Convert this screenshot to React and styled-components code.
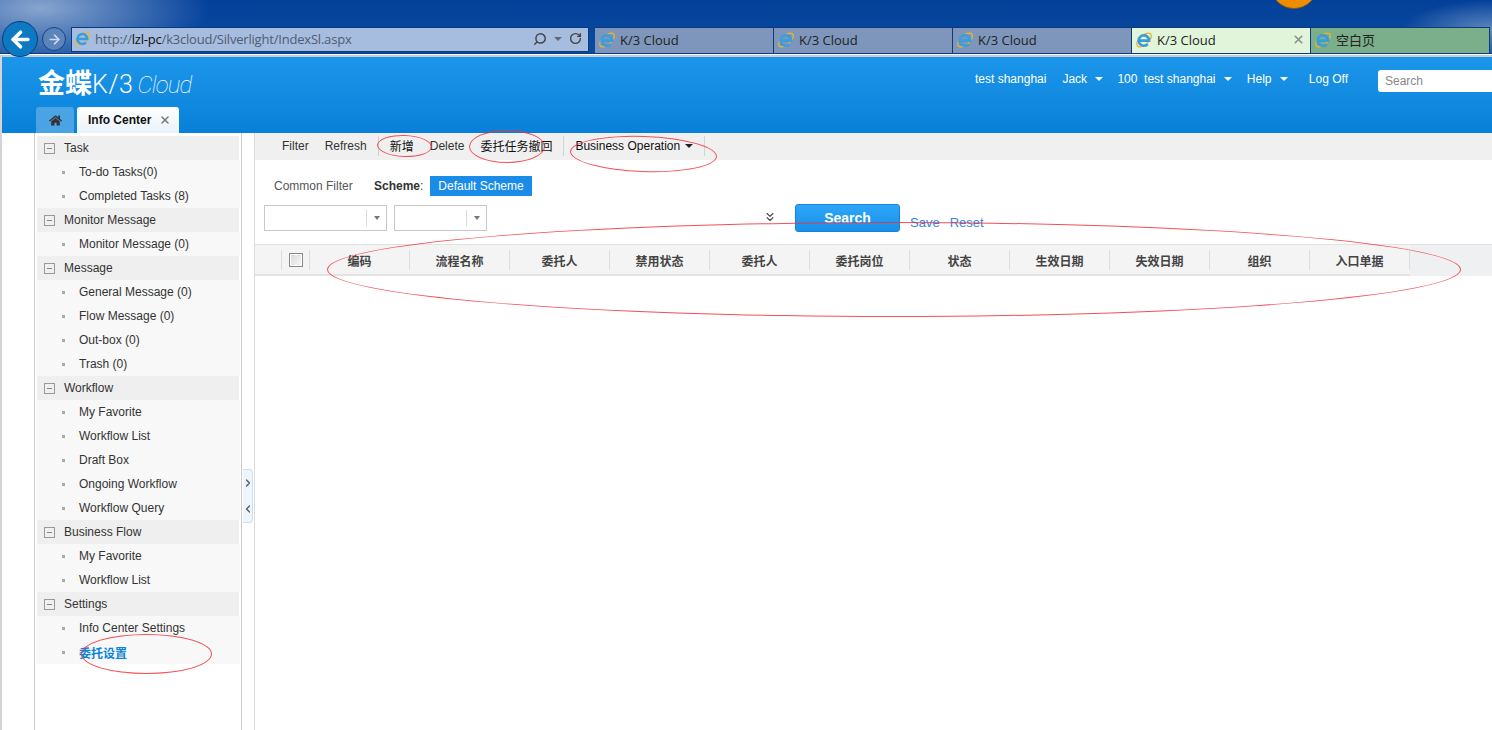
import React from 'react'
import styled, { createGlobalStyle } from 'styled-components'
import { FaHome } from 'react-icons/fa'
import { Search as SearchIcon, RotateCw, ArrowLeft, ArrowRight, X, ChevronRight, ChevronLeft, ChevronsDown } from 'lucide-react'

const GlobalStyle = createGlobalStyle`
  html, body { margin: 0; padding: 0; background: #fff; }
  body { font-family: "Liberation Sans", "Noto Sans CJK SC", sans-serif; font-size: 12px; color: #333; }
`

const Screen = styled.div`
  position: relative;
  width: 1492px;
  height: 730px;
  overflow: hidden;
  background: #fff;
`

/* browser chrome */
const Chrome = styled.div`
  position: relative;
  display: flex;
  align-items: flex-start;
  height: 54px;
  padding-top: 27px;
  box-sizing: border-box;
  border-bottom: 1px solid #0b3a7e;
  background:
    radial-gradient(ellipse 170px 60px at 40px 8px, rgba(170, 190, 220, 0.8), transparent),
    radial-gradient(ellipse 90px 30px at 1492px 30px, rgba(170, 190, 220, 0.55), transparent),
    linear-gradient(#03409a, #0b4c9f);
`

const Sun = styled.div`
  position: absolute;
  left: 1270px;
  top: -39px;
  width: 48px;
  height: 48px;
  border-radius: 50%;
  background: #f08c00;
  border: 1px solid #7a5a20;
  box-sizing: border-box;
`

const BackBtn = styled.div`
  position: absolute;
  left: 2px;
  top: 21px;
  width: 36px;
  height: 36px;
  z-index: 2;
  box-sizing: border-box;
  border-radius: 50%;
  border: 1px solid #0b3a7e;
  background: #0c79c2;
  color: #fff;
  display: flex;
  align-items: center;
  justify-content: center;
`

const ForwardBtn = styled.div`
  width: 24px;
  height: 24px;
  margin: 0 5px 0 42px;
  border-radius: 50%;
  box-sizing: border-box;
  border: 1px solid #153f86;
  background: #5b84bb;
  color: #cdd9ea;
  display: flex;
  align-items: center;
  justify-content: center;
`

const AddressBar = styled.div`
  display: flex;
  align-items: center;
  width: 518px;
  height: 25px;
  padding: 0 6px 2px 2px;
  box-sizing: border-box;
  border: 1px solid #0b3a7e;
  background: #a7bddf;
  font-family: "Open Sans", "Noto Sans", sans-serif;
  font-size: 13px;
  color: #4d5c74;
  gap: 4px;
`

const Host = styled.span`
  color: #111;
`

const Url = styled.span`
  flex: 1;
  letter-spacing: -0.2px;
`

const TinyCaret = styled.span`
  width: 0;
  height: 0;
  margin: 0 3px;
  border-left: 4px solid transparent;
  border-right: 4px solid transparent;
  border-top: 4px solid ${p => p.$color || '#fff'};
  display: inline-block;
`

const Tabs = styled.div`
  display: flex;
  margin-left: 6px;
`

const BrowserTab = styled.div`
  display: flex;
  align-items: center;
  gap: 4px;
  width: 179px;
  height: 26px;
  padding: 0 5px 2px 3px;
  box-sizing: border-box;
  border-right: 1px solid #123a78;
  border-top: 1px solid #123a78;
  background: ${p => p.$bg || '#7e96bb'};
  font-family: "Open Sans", "Noto Sans CJK SC", sans-serif;
  font-size: 13px;
  color: #222;
`

const TabClose = styled.span`
  margin-left: auto;
  color: #8a8f8a;
  display: flex;
`

const IeIcon = ({ size = 18 }) => (
  <svg width={size} height={size} viewBox="0 0 20 20" fill="none">
    <ellipse cx="10" cy="10" rx="10" ry="5" transform="rotate(-42 10 10)" stroke="#f0b428" strokeWidth="1.4" />
    <path d="M4 10.6h11.6a5.8 5.8 0 1 0-1.5 3.9" stroke="#3c9ddb" strokeWidth="3" />
  </svg>
)

/* application */
const Page = styled.div`
  border-top: 2px solid #c3cbd4;
  margin-top: 1px;
  border-left: 2px solid #d4d4d4;
`

const Header = styled.header`
  height: 76px;
  padding-left: 34px;
  box-sizing: border-box;
  display: flex;
  flex-direction: column;
  background: linear-gradient(#1c96ea, #0880d9);
`

const HeaderTop = styled.div`
  display: flex;
  height: 50px;
  align-items: center;
  color: #fff;
`

const Logo = styled.div`
  display: flex;
  align-items: baseline;
  margin: -1px 0 0 2px;
  color: #fff;
`

const LogoCn = styled.b`
  font-family: "Noto Sans CJK SC", sans-serif;
  font-size: 27px;
  line-height: 36px;
`

const LogoK3 = styled.span`
  font-family: "Roboto", sans-serif;
  font-weight: 300;
  font-size: 25px;
  letter-spacing: 0.6px;
`

const LogoCloud = styled.i`
  font-family: "Roboto", sans-serif;
  font-weight: 100;
  font-size: 24px;
  margin-left: 4px;
  letter-spacing: -0.8px;
`

const Nav = styled.nav`
  display: flex;
  align-items: center;
  margin-left: auto;
  margin-top: -6px;
  font-size: 12px;
`

const NavItem = styled.span`
  display: flex;
  align-items: center;
  margin-left: ${p => p.$gap || 0}px;
  white-space: pre;
  gap: 2px;
`

const SearchField = styled.div`
  width: 114px;
  height: 22px;
  margin-left: 30px;
  margin-top: 3px;
  padding-left: 7px;
  box-sizing: border-box;
  background: #fff;
  border-radius: 3px 0 0 3px;
  color: #888;
  line-height: 22px;
`

const TabRow = styled.div`
  display: flex;
  align-items: flex-end;
  gap: 3px;
  height: 26px;
`

const HomeTab = styled.div`
  width: 38px;
  height: 26px;
  border-radius: 3px 3px 0 0;
  background: #4aa4e4;
  color: #333;
  display: flex;
  align-items: center;
  justify-content: center;
`

const ActiveTab = styled.div`
  width: 102px;
  height: 26px;
  padding: 0 8px 0 11px;
  box-sizing: border-box;
  display: flex;
  align-items: center;
  justify-content: space-between;
  border-radius: 3px 3px 0 0;
  background: linear-gradient(#fff, #e8f3fb);
  color: #111;
  font-weight: bold;
`

const TabX = styled.span`
  color: #777;
  display: flex;
`

const Main = styled.div`
  display: flex;
  height: 597px;
`

const Side = styled.aside`
  width: 208px;
  margin-left: 32px;
  padding: 3px 1px 0;
  box-sizing: border-box;
  border: 1px solid #ccc;
  border-top: 0;
  border-bottom: 0;
`

const GroupHead = styled.div`
  display: flex;
  align-items: center;
  height: 24px;
  margin: 0 1px;
  padding-left: 7px;
  background: #efefef;
  color: #333;
`

const Minus = styled.span`
  position: relative;
  width: 9px;
  height: 9px;
  margin-right: 9px;
  border: 1px solid #999;
  &::after {
    content: '';
    position: absolute;
    left: 2px;
    right: 2px;
    top: 4px;
    height: 1px;
    background: #888;
  }
`

const Item = styled.div`
  display: flex;
  align-items: center;
  height: 24px;
  padding-left: 26px;
  background: #f8f8f8;
  color: ${p => (p.$active ? '#0a84d8' : '#333')};
  font-weight: ${p => (p.$active ? 'bold' : 'normal')};
  &::before {
    content: '';
    width: 3px;
    height: 3px;
    margin-right: 14px;
    background: #aaa;
  }
`

const Gutter = styled.div`
  width: 12px;
  padding-top: 336px;
`

const Collapser = styled.div`
  width: 10px;
  height: 54px;
  margin-left: 1px;
  box-sizing: border-box;
  border: 1px solid #c9e2f6;
  border-left: 0;
  border-radius: 0 4px 4px 0;
  background: #edf6fd;
  color: #556;
  display: flex;
  flex-direction: column;
  align-items: center;
  justify-content: space-around;
`

const Content = styled.section`
  flex: 1;
  border-left: 1px solid #ddd;
  min-width: 0;
`

const Toolbar = styled.div`
  display: flex;
  align-items: center;
  height: 27px;
  padding: 0 0 2px 27px;
  box-sizing: border-box;
  background: #f0f0f0;
  color: #333;
`

const Tool = styled.span`
  display: flex;
  align-items: center;
  gap: 2px;
  margin-right: ${p => p.$mr ?? 15}px;
  color: ${p => (p.$dark ? '#111' : '#333')};
`

const Sep = styled.span`
  width: 1px;
  height: 20px;
  margin-right: 11px;
  background: #ccd4de;
`

const FilterRow = styled.div`
  display: flex;
  align-items: center;
  height: 20px;
  margin-top: 16px;
  padding-left: 19px;
`

const Muted = styled.span`
  color: #555;
  width: 100px;
`

const SchemeLabel = styled.span`
  width: 56px;
  color: #444;
  b { color: #333; }
`

const SchemeBtn = styled.span`
  width: 102px;
  height: 20px;
  line-height: 20px;
  text-align: center;
  background: #1a8ce8;
  color: #fff;
`

const SearchRow = styled.div`
  display: flex;
  align-items: center;
  height: 28px;
  margin-top: 8px;
  padding-left: 9px;
`

const Select = styled.div`
  position: relative;
  width: ${p => p.$w}px;
  height: 26px;
  margin-right: 7px;
  box-sizing: border-box;
  border: 1px solid #c8c8c8;
  background: #fff;
  &::before {
    content: '';
    position: absolute;
    right: 19px;
    top: 4px;
    bottom: 4px;
    width: 1px;
    background: #ddd;
  }
  &::after {
    content: '';
    position: absolute;
    right: 6px;
    top: 10px;
    border-left: 3.5px solid transparent;
    border-right: 3.5px solid transparent;
    border-top: 4px solid #777;
  }
`

const More = styled.span`
  display: flex;
  width: 14px;
  margin: -2px 0 0 269px;
  color: #444;
`

const SearchBtn = styled.button`
  width: 105px;
  height: 28px;
  margin-left: 18px;
  padding: 0;
  border: 1px solid #1583d8;
  border-radius: 3px;
  background: linear-gradient(#2ea6f7, #1790ea);
  color: #fff;
  font: bold 14px "Liberation Sans", sans-serif;
`

const Links = styled.span`
  display: flex;
  gap: 10px;
  margin: 9px 0 0 10px;
  color: #2f86e8;
  font-size: 13px;
`

const TableHead = styled.div`
  display: flex;
  height: 32px;
  margin-top: 12px;
  border-top: 1px solid #e2e2e2;
  box-sizing: border-box;
  background: #eff0f2;
`

const HeadRow = styled.div`
  display: flex;
  align-items: center;
  box-sizing: border-box;
  height: 31px;
  background: #f4f4f4;
  border-bottom: 2px solid #e3e3e3;
`

const Cell = styled.div`
  display: flex;
  align-items: center;
  justify-content: center;
  width: ${p => p.$w || 100}px;
  height: 20px;
  padding-top: 1px;
  box-sizing: border-box;
  border-right: 1px solid #ddd;
  font-weight: bold;
  color: #444;
  font-family: "Noto Sans CJK SC", sans-serif;
`

const Check = styled.span`
  width: 14px;
  height: 14px;
  margin-top: -1px;
  box-sizing: border-box;
  border: 1px solid #888;
  background: linear-gradient(135deg, #d8d8d8, #f8f8f8);
  box-shadow: inset 0 0 0 1px #fff;
`

/* hand-drawn markup on the screenshot */
const Mark = styled.div`
  position: absolute;
  left: ${p => p.$x}px;
  top: ${p => p.$y}px;
  width: ${p => p.$w}px;
  height: ${p => p.$h}px;
  box-sizing: border-box;
  border: 1px solid rgba(240, 50, 60, 0.85);
  border-radius: 50%;
  transform: rotate(${p => p.$r || 0}deg);
  pointer-events: none;
`

const groups = [
  ['Task', ['To-do Tasks(0)', 'Completed Tasks (8)']],
  ['Monitor Message', ['Monitor Message (0)']],
  ['Message', ['General Message (0)', 'Flow Message (0)', 'Out-box (0)', 'Trash (0)']],
  ['Workflow', ['My Favorite', 'Workflow List', 'Draft Box', 'Ongoing Workflow', 'Workflow Query']],
  ['Business Flow', ['My Favorite', 'Workflow List']],
  ['Settings', ['Info Center Settings', '委托设置']],
]

const columns = ['编码', '流程名称', '委托人', '禁用状态', '委托人', '委托岗位', '状态', '生效日期', '失效日期', '组织', '入口单据']

export default function App() {
  return (
    <Screen>
      <GlobalStyle />
      <Chrome>
        <Sun />
        <BackBtn><ArrowLeft size={25} strokeWidth={3.5} /></BackBtn>
        <ForwardBtn><ArrowRight size={15} strokeWidth={2.5} /></ForwardBtn>
        <AddressBar>
          <IeIcon size={17} />
          <Url>http://<Host>lzl-pc</Host>/k3cloud/Silverlight/IndexSl.aspx</Url>
          <SearchIcon size={14} strokeWidth={2.5} color="#444" style={{ transform: 'scaleX(-1)' }} />
          <TinyCaret $color="#667" />
          <RotateCw size={13} strokeWidth={2.5} color="#444" />
        </AddressBar>
        <Tabs>
          <BrowserTab><IeIcon />K/3 Cloud</BrowserTab>
          <BrowserTab><IeIcon />K/3 Cloud</BrowserTab>
          <BrowserTab><IeIcon />K/3 Cloud</BrowserTab>
          <BrowserTab $bg="#e0f5da"><IeIcon />K/3 Cloud<TabClose><X size={13} strokeWidth={3} /></TabClose></BrowserTab>
          <BrowserTab $bg="#7bae8a"><IeIcon />空白页</BrowserTab>
        </Tabs>
      </Chrome>

      <Page>
        <Header>
          <HeaderTop>
            <Logo>
              <LogoCn>金蝶</LogoCn>
              <LogoK3>K/3</LogoK3>
              <LogoCloud>Cloud</LogoCloud>
            </Logo>
            <Nav>
              <NavItem>test shanghai</NavItem>
              <NavItem $gap={16}>Jack <TinyCaret /></NavItem>
              <NavItem $gap={11}>100  test shanghai <TinyCaret /></NavItem>
              <NavItem $gap={12}>Help <TinyCaret /></NavItem>
              <NavItem $gap={18}>Log Off</NavItem>
              <SearchField>Search</SearchField>
            </Nav>
          </HeaderTop>
          <TabRow>
            <HomeTab><FaHome size={13} /></HomeTab>
            <ActiveTab>Info Center<TabX><X size={12} strokeWidth={3} /></TabX></ActiveTab>
          </TabRow>
        </Header>

        <Main>
          <Side>
            {groups.map(([title, items]) => (
              <div key={title}>
                <GroupHead><Minus />{title}</GroupHead>
                {items.map(label => (
                  <Item key={label} $active={label === '委托设置'}>{label}</Item>
                ))}
              </div>
            ))}
          </Side>
          <Gutter>
            <Collapser>
              <ChevronRight size={12} strokeWidth={2.5} />
              <ChevronLeft size={12} strokeWidth={2.5} />
            </Collapser>
          </Gutter>
          <Content>
            <Toolbar>
              <Tool $mr={16}>Filter</Tool>
              <Tool $mr={11}>Refresh</Tool>
              <Sep />
              <Tool $mr={16} $dark>新增</Tool>
              <Tool $mr={16}>Delete</Tool>
              <Tool $mr={11} $dark>委托任务撤回</Tool>
              <Sep />
              <Tool $mr={8} $dark>Business Operation <TinyCaret $color="#222" /></Tool>
              <Sep />
            </Toolbar>
            <FilterRow>
              <Muted>Common Filter</Muted>
              <SchemeLabel><b>Scheme</b>:</SchemeLabel>
              <SchemeBtn>Default Scheme</SchemeBtn>
            </FilterRow>
            <SearchRow>
              <Select $w={123} />
              <Select $w={93} />
              <More><ChevronsDown size={14} strokeWidth={2} /></More>
              <SearchBtn>Search</SearchBtn>
              <Links><span>Save</span><span>Reset</span></Links>
            </SearchRow>
            <TableHead>
              <HeadRow>
                <Cell $w={27} />
                <Cell $w={28}><Check /></Cell>
                {columns.map((c, i) => <Cell key={i}>{c}</Cell>)}
              </HeadRow>
            </TableHead>
          </Content>
        </Main>
      </Page>

      <Mark $x={377} $y={135} $w={55} $h={22} $r={2} />
      <Mark $x={469} $y={130} $w={76} $h={33} />
      <Mark $x={570} $y={136} $w={147} $h={36} $r={2} />
      <Mark $x={327} $y={222} $w={1134} $h={95} />
      <Mark $x={81} $y={634} $w={131} $h={40} />
    </Screen>
  )
}
